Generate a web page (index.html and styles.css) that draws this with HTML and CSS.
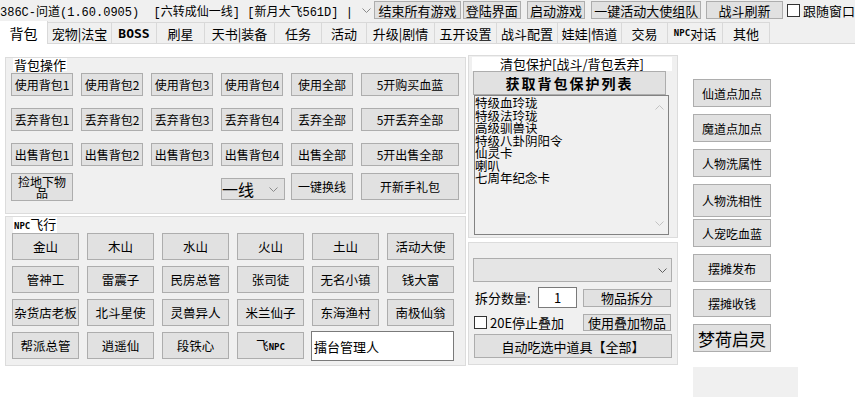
FILE: index.html
```html
<!DOCTYPE html>
<html lang="zh-CN">
<head>
<meta charset="UTF-8">
<title>386C-问道</title>
<link rel="stylesheet" href="styles.css">
</head>
<body>
<div class="topbar">
    <div class="title-combo">
        <span class="title-text">386C-问道(1.60.0905)&nbsp;&nbsp;[六转成仙一线]&nbsp;[新月大飞561D]&nbsp;|</span>
        <span class="combo-arrow"><svg width="9" height="5" viewBox="0 0 9 5"><path d="M0.5 0.5 L4.5 4.5 L8.5 0.5" fill="none" stroke="#8a8a8a" stroke-width="1"/></svg></span>
    </div>
    <button class="btn top-btn b-end">结束所有游戏</button>
    <button class="btn top-btn b-login">登陆界面</button>
    <button class="btn top-btn b-start">启动游戏</button>
    <button class="btn top-btn b-team">一键活动大使组队</button>
    <button class="btn top-btn b-fight">战斗刷新</button>
    <label class="check top-check"><span class="box"></span>跟随窗口</label>
</div>

<div class="tabs">
    <div class="tab active">背包</div>
    <div class="tab">宠物|法宝</div>
    <div class="tab small">BOSS</div>
    <div class="tab">刷星</div>
    <div class="tab">天书|装备</div>
    <div class="tab">任务</div>
    <div class="tab">活动</div>
    <div class="tab">升级|剧情</div>
    <div class="tab">五开设置</div>
    <div class="tab">战斗配置</div>
    <div class="tab">娃娃|悟道</div>
    <div class="tab">交易</div>
    <div class="tab"><span class="small">NPC</span>对话</div>
    <div class="tab">其他</div>
</div>

<div class="page">
    <div class="col-left">
        <div class="group bag">
            <div class="group-title">背包操作</div>
            <div class="bag-row">
                <button class="btn b62">使用背包1</button>
                <button class="btn b62">使用背包2</button>
                <button class="btn b62">使用背包3</button>
                <button class="btn b62">使用背包4</button>
                <button class="btn b62">使用全部</button>
                <button class="btn b98">5开购买血蓝</button>
            </div>
            <div class="bag-row">
                <button class="btn b62">丢弃背包1</button>
                <button class="btn b62">丢弃背包2</button>
                <button class="btn b62">丢弃背包3</button>
                <button class="btn b62">丢弃背包4</button>
                <button class="btn b62">丢弃全部</button>
                <button class="btn b98">5开丢弃全部</button>
            </div>
            <div class="bag-row">
                <button class="btn b62">出售背包1</button>
                <button class="btn b62">出售背包2</button>
                <button class="btn b62">出售背包3</button>
                <button class="btn b62">出售背包4</button>
                <button class="btn b62">出售全部</button>
                <button class="btn b98">5开出售全部</button>
            </div>
            <div class="bag-row last">
                <button class="btn b62 pick">捡地下物品</button>
                <div class="line-combo">
                    <span>一线</span>
                    <svg width="9" height="5" viewBox="0 0 9 5"><path d="M0.5 0.5 L4.5 4.5 L8.5 0.5" fill="none" stroke="#8a8a8a" stroke-width="1"/></svg>
                </div>
                <button class="btn b62 tall">一键换线</button>
                <button class="btn b98 tall">开新手礼包</button>
            </div>
        </div>

        <div class="group npc">
            <div class="group-title"><span class="small">NPC</span>飞行</div>
            <div class="npc-grid">
                <button class="btn">金山</button>
                <button class="btn">木山</button>
                <button class="btn">水山</button>
                <button class="btn">火山</button>
                <button class="btn">土山</button>
                <button class="btn">活动大使</button>
                <button class="btn">管神工</button>
                <button class="btn">雷震子</button>
                <button class="btn">民房总管</button>
                <button class="btn">张司徒</button>
                <button class="btn">无名小镇</button>
                <button class="btn">钱大富</button>
                <button class="btn">杂货店老板</button>
                <button class="btn">北斗星使</button>
                <button class="btn">灵兽异人</button>
                <button class="btn">米兰仙子</button>
                <button class="btn">东海渔村</button>
                <button class="btn">南极仙翁</button>
                <button class="btn">帮派总管</button>
                <button class="btn">逍遥仙</button>
                <button class="btn">段铁心</button>
                <button class="btn">飞<span class="small">NPC</span></button>
                <input class="npc-input" type="text" value="擂台管理人">
            </div>
        </div>
    </div>

    <div class="col-mid">
        <div class="panel protect">
            <div class="protect-title">清包保护[战斗/背包丢弃]</div>
            <button class="btn fetch">获取背包保护列表</button>
            <div class="listbox">
                <div class="list-items">
                    <div>特级血玲珑</div>
                    <div>特级法玲珑</div>
                    <div>高级驯兽诀</div>
                    <div>特级八卦阴阳令</div>
                    <div>仙灵卡</div>
                    <div>喇叭</div>
                    <div>七周年纪念卡</div>
                </div>
                <div class="scrollbar">
                    <svg width="9" height="5" viewBox="0 0 9 5"><path d="M0.5 4.5 L4.5 0.5 L8.5 4.5" fill="none" stroke="#c2c2c2" stroke-width="1"/></svg>
                    <svg width="9" height="5" viewBox="0 0 9 5"><path d="M0.5 0.5 L4.5 4.5 L8.5 0.5" fill="none" stroke="#c2c2c2" stroke-width="1"/></svg>
                </div>
            </div>
        </div>

        <div class="panel split">
            <div class="item-combo">
                <svg width="9" height="5" viewBox="0 0 9 5"><path d="M0.5 0.5 L4.5 4.5 L8.5 0.5" fill="none" stroke="#606060" stroke-width="1"/></svg>
            </div>
            <div class="split-row">
                <span class="split-label">拆分数量:</span>
                <input class="qty" type="text" value="1">
                <button class="btn split-btn">物品拆分</button>
            </div>
            <div class="split-row stack">
                <label class="check"><span class="box"></span>20E停止叠加</label>
                <button class="btn split-btn">使用叠加物品</button>
            </div>
            <button class="btn auto-eat">自动吃选中道具【全部】</button>
        </div>
    </div>

    <div class="col-right">
        <button class="btn side">仙道点加点</button>
        <button class="btn side">魔道点加点</button>
        <button class="btn side">人物洗属性</button>
        <button class="btn side tall">人物洗相性</button>
        <button class="btn side close">人宠吃血蓝</button>
        <button class="btn side">摆摊发布</button>
        <button class="btn side">摆摊收钱</button>
        <button class="btn side big">梦荷启灵</button>
        <div class="blank"></div>
    </div>
</div>
</body>
</html>
```

FILE: styles.css
```css
* {
    box-sizing: border-box;
}
body {
    margin: 0;
    width: 855px;
    height: 399px;
    overflow: hidden;
    background-color: #ffffff;
    font-family: "Noto Sans CJK SC", "Noto Sans", sans-serif;
    font-size: 12px;
    color: #000000;
}
.small {
    font-family: "DejaVu Sans Mono", monospace;
    font-size: 9px;
    font-weight: bold;
}

/* buttons */
.btn {
    font-family: inherit;
    font-size: 12px;
    color: #000000;
    background-color: #e1e1e1;
    border: 1px solid #adadad;
    padding: 0;
    margin: 0;
    line-height: 13px;
    white-space: nowrap;
}

/* top bar */
.topbar {
    height: 22px;
    background-color: #f0f0f0;
    display: flex;
    align-items: flex-start;
    padding-top: 1px;
}
.title-combo {
    width: 375px;
    height: 19px;
    display: flex;
    align-items: center;
}
.title-text {
    width: 360px;
    font-family: "Liberation Mono", "Noto Sans CJK SC", monospace;
    font-size: 12px;
    white-space: nowrap;
    overflow: hidden;
}
.combo-arrow {
    width: 13px;
    display: flex;
    justify-content: center;
}
.top-btn {
    height: 18px;
    font-size: 13px;
}
.b-end { width: 87px; }
.b-login { width: 58px; margin-left: 2px; }
.b-start { width: 59px; margin-left: 6px; }
.b-team { width: 110px; margin-left: 6px; }
.b-fight { width: 77px; margin-left: 5px; }
.check {
    display: flex;
    align-items: center;
    font-size: 13px;
    white-space: nowrap;
}
.box {
    width: 13px;
    height: 13px;
    border: 1px solid #333333;
    background-color: #ffffff;
    margin-right: 3px;
}
.top-check {
    margin-left: 4px;
    height: 18px;
}

/* tabs */
.tabs {
    height: 22px;
    background-color: #f0f0f0;
    display: flex;
    align-items: flex-end;
    border-bottom: 1px solid #d9d9d9;
}
.tab {
    height: 21px;
    background-color: #f0f0f0;
    border-top: 1px solid #d9d9d9;
    border-right: 1px solid #d9d9d9;
    font-size: 13px;
    display: flex;
    align-items: center;
    justify-content: center;
    white-space: nowrap;
}
.tab.active {
    height: 23px;
    margin-bottom: -1px;
    background-color: #ffffff;
    border-top: none;
    font-size: 14px;
}
.tab:nth-child(1) { width: 48px; }
.tab:nth-child(2) { width: 64px; }
.tab:nth-child(3) { width: 45px; }
.tab:nth-child(4) { width: 48px; }
.tab:nth-child(5) { width: 70px; }
.tab:nth-child(6) { width: 47px; }
.tab:nth-child(7) { width: 45px; }
.tab:nth-child(8) { width: 68px; }
.tab:nth-child(9) { width: 62px; }
.tab:nth-child(10) { width: 61px; }
.tab:nth-child(11) { width: 64px; }
.tab:nth-child(12) { width: 46px; }
.tab:nth-child(13) { width: 55px; }
.tab:nth-child(14) { width: 47px; }

/* page */
.page {
    display: flex;
    align-items: flex-start;
}
.col-left {
    width: 461px;
    margin-left: 5px;
    margin-top: 13px;
}
.group {
    position: relative;
    background-color: #f0f0f0;
    border: 1px solid #dcdcdc;
}
.group-title {
    position: absolute;
    top: 0;
    left: 7px;
    background-color: #ffffff;
    padding: 0 1px;
    font-size: 13px;
    line-height: 13px;
}

/* bag group */
.bag {
    height: 157px;
    padding: 15px 0 0 5px;
}
.bag-row {
    display: flex;
    align-items: flex-end;
    gap: 8px;
    height: 23px;
}
.bag-row + .bag-row {
    margin-top: 12px;
}
.bag-row.last {
    margin-top: 7px;
    height: 28px;
}
.b62 { width: 62px; height: 23px; }
.b98 { width: 98px; height: 23px; }
.btn.tall { height: 27px; margin-bottom: 1px; }
.btn.pick {
    height: 28px;
    white-space: normal;
    padding: 0 5px;
    line-height: 11px;
    margin-right: 140px;
}
.line-combo {
    width: 64px;
    height: 22px;
    margin-bottom: 1px;
    background-color: #e1e1e1;
    border: 1px solid #adadad;
    display: flex;
    align-items: center;
    justify-content: space-between;
    padding: 0 6px 0 0;
    font-size: 16px;
    margin-right: -2px;
}

/* npc group */
.npc {
    height: 150px;
    margin-top: 2px;
    padding: 16px 0 0 6px;
}
.npc-grid {
    display: grid;
    grid-template-columns: repeat(6, 67px);
    grid-auto-rows: 27px;
    column-gap: 8px;
    row-gap: 6px;
}
.npc-grid .btn {
    font-size: 12.5px;
}
.npc-input {
    grid-column: span 2;
    height: 30px;
    margin: -1px 0 0 -1px;
    border: 1px solid #7a7a7a;
    background-color: #ffffff;
    font-family: inherit;
    font-size: 13px;
    padding: 0 2px;
    color: #000000;
}

/* middle column */
.col-mid {
    width: 210px;
    margin-left: 2px;
    margin-top: 11px;
}
.panel {
    background-color: #f0f0f0;
    border: 1px solid #dcdcdc;
}
.protect {
    height: 183px;
    padding-top: 1px;
}
.protect-title {
    width: 200px;
    height: 14px;
    margin-left: 3px;
    background-color: #ffffff;
    text-align: center;
    font-size: 13px;
    line-height: 14px;
}
.btn.fetch {
    display: block;
    width: 193px;
    height: 24px;
    margin-left: 4px;
    font-size: 14px;
    font-weight: bold;
    letter-spacing: 2px;
}
.listbox {
    width: 195px;
    height: 140px;
    margin-left: 5px;
    border: 1px solid #828282;
    display: flex;
    background-color: #f0f0f0;
}
.list-items {
    flex: 1;
    font-size: 12.5px;
    line-height: 12.5px;
    padding-top: 1px;
}
.scrollbar {
    width: 17px;
    display: flex;
    flex-direction: column;
    justify-content: space-between;
    align-items: center;
    padding: 9px 0 8px;
}
.split {
    height: 123px;
    margin-top: 4px;
    padding: 15px 5px 0 4px;
}
.item-combo {
    width: 199px;
    height: 24px;
    background-color: #e5e5e5;
    border: 1px solid #adadad;
    display: flex;
    align-items: center;
    justify-content: flex-end;
    padding-right: 4px;
}
.split-row {
    display: flex;
    align-items: center;
    margin-top: 5px;
    padding-left: 2px;
    height: 21px;
}
.split-label {
    width: 63px;
    font-size: 13px;
}
.qty {
    width: 39px;
    height: 21px;
    border: 1px solid #7a7a7a;
    background-color: #ffffff;
    font-family: inherit;
    font-size: 13px;
    text-align: center;
    padding: 0;
    color: #000000;
}
.btn.split-btn {
    width: 88px;
    height: 18px;
    margin-left: auto;
    margin-right: 1px;
    font-size: 13px;
}
.split-row.stack {
    margin-top: 2px;
    height: 24px;
    padding-left: 1px;
}
.split-row.stack .split-btn {
    height: 17px;
}
.btn.auto-eat {
    display: block;
    width: 198px;
    height: 24px;
    margin: 0 0 0 1px;
    font-size: 13px;
}

/* right column */
.col-right {
    margin-left: 15px;
    margin-top: 35px;
    display: flex;
    flex-direction: column;
    align-items: flex-start;
}
.btn.side {
    width: 78px;
    height: 28px;
    margin-bottom: 7px;
}
.btn.side.tall {
    height: 33px;
    margin-bottom: 2px;
}
.btn.side.big {
    font-size: 17px;
    margin-bottom: 15px;
}
.blank {
    width: 105px;
    height: 30px;
    background-color: #f0f0f0;
}
```
